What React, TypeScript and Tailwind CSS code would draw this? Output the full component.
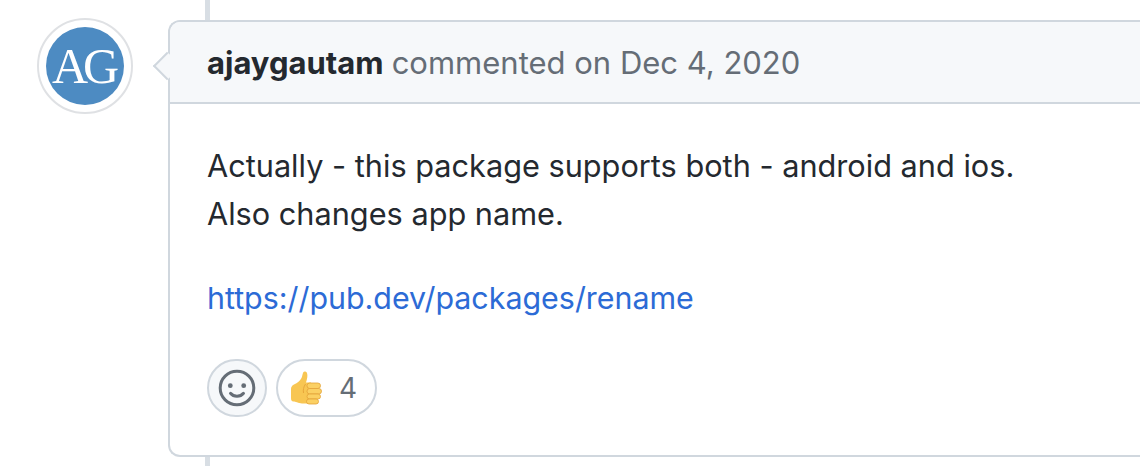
function Smiley() {
  return (
    <svg width="38" height="38" viewBox="0 0 38 38" fill="none">
      <circle cx="19" cy="19" r="16.8" stroke="#656d76" strokeWidth="3" />
      <circle cx="12.300" cy="16.700" r="2.400" fill="#656d76" />
      <circle cx="25.700" cy="16.700" r="2.400" fill="#656d76" />
      <path d="M12.500 24.300c1.600 2 3.800 3 6.500 3s4.900-1 6.500-3" stroke="#656d76" strokeWidth="3" strokeLinecap="round" />
    </svg>
  );
}

function ThumbsUp() {
  return (
    <svg width="32" height="34" viewBox="0 0 32 34">
      <path d="M1 18c0-2 1-3.500 3-4.500 3.500-1.700 6-3.500 7.500-6.500 1-2.200 1-4.500 1.800-5.800.8-1.200 3-1 3.700.8.900 2.300.2 6-1 9.500h5v21h-9c-2 0-3.500-.6-5-1.200-1.500-.6-2.500-.8-3.500-.8-2 0-2.500-1.500-2.500-3.500z" fill="#f8c652" />
      <path d="M15.500 13c-2 3-2.500 6-2 9" stroke="#e8a63a" strokeWidth="1" fill="none" />
      <rect x="17" y="12" width="13.500" height="5.500" rx="2.700" fill="#fbd063" stroke="#e3a238" strokeWidth="0.8" />
      <rect x="17" y="17.500" width="14.500" height="5.500" rx="2.700" fill="#fbd063" stroke="#e3a238" strokeWidth="0.8" />
      <rect x="17" y="23" width="13.500" height="5" rx="2.500" fill="#fbd063" stroke="#e3a238" strokeWidth="0.8" />
      <rect x="16.500" y="28" width="12" height="5" rx="2.500" fill="#fbd063" stroke="#e3a238" strokeWidth="0.8" />
    </svg>
  );
}

export default function App() {
  return (
    <div className="relative h-[466px] w-[1140px] overflow-hidden bg-white font-['Inter',sans-serif] text-[#24292f]">
      {/* timeline */}
      <div className="absolute left-[205px] top-0 h-full w-[5px] bg-[#d8dee4]" />

      <div className="relative flex pl-[37px] pt-[18px]">
        <div className="flex h-[96px] w-[96px] shrink-0 items-center justify-center rounded-full border-2 border-[#dfe1e4] bg-white">
          <div className="flex h-[78px] w-[78px] items-center justify-center rounded-full bg-[#4d8bc2] pr-[4px] font-['Liberation_Serif',serif] text-[50px] leading-none tracking-[-5px] text-white">
            AG
          </div>
        </div>

        <div className="relative ml-[35px] mt-[2px] h-[437px] w-[1000px] shrink-0 rounded-l-[12px] border-2 border-r-0 border-[#d0d7de] bg-white">
          {/* arrow */}
          <div className="absolute left-[-13px] top-[34px] h-[20px] w-[20px] rotate-45 border-b-2 border-l-2 border-[#d0d7de] bg-[#f6f8fa]" />

          <div className="relative flex h-[82px] items-center rounded-tl-[10px] border-b-2 border-[#d0d7de] bg-[#f6f8fa] pl-[37px] text-[31px] leading-none">
            <span className="font-bold">ajaygautam</span>
            <span className="ml-[8px] text-[#656d76]">commented on Dec 4, 2020</span>
          </div>

          <div className="pl-[37px] pt-[38px] text-[30.7px] leading-[48px]">
            <p>Actually - this package supports both - android and ios.</p>
            <p>Also changes app name.</p>
            <p className="mt-[36px] text-[30.4px] text-[#2c6bd6]">https://pub.dev/packages/rename</p>
          </div>

          <div className="mt-[37px] flex gap-[9px] pl-[37px]">
            <div className="flex h-[58px] w-[60px] items-center justify-center rounded-full border-2 border-[#d0d7de] bg-[#f6f8fa]">
              <Smiley />
            </div>
            <div className="flex h-[58px] w-[101px] items-center rounded-full border-2 border-[#d0d7de] bg-white pl-[12px]">
              <ThumbsUp />
              <span className="ml-[17px] text-[28px] leading-none text-[#656d76]">4</span>
            </div>
          </div>
        </div>
      </div>
    </div>
  );
}
